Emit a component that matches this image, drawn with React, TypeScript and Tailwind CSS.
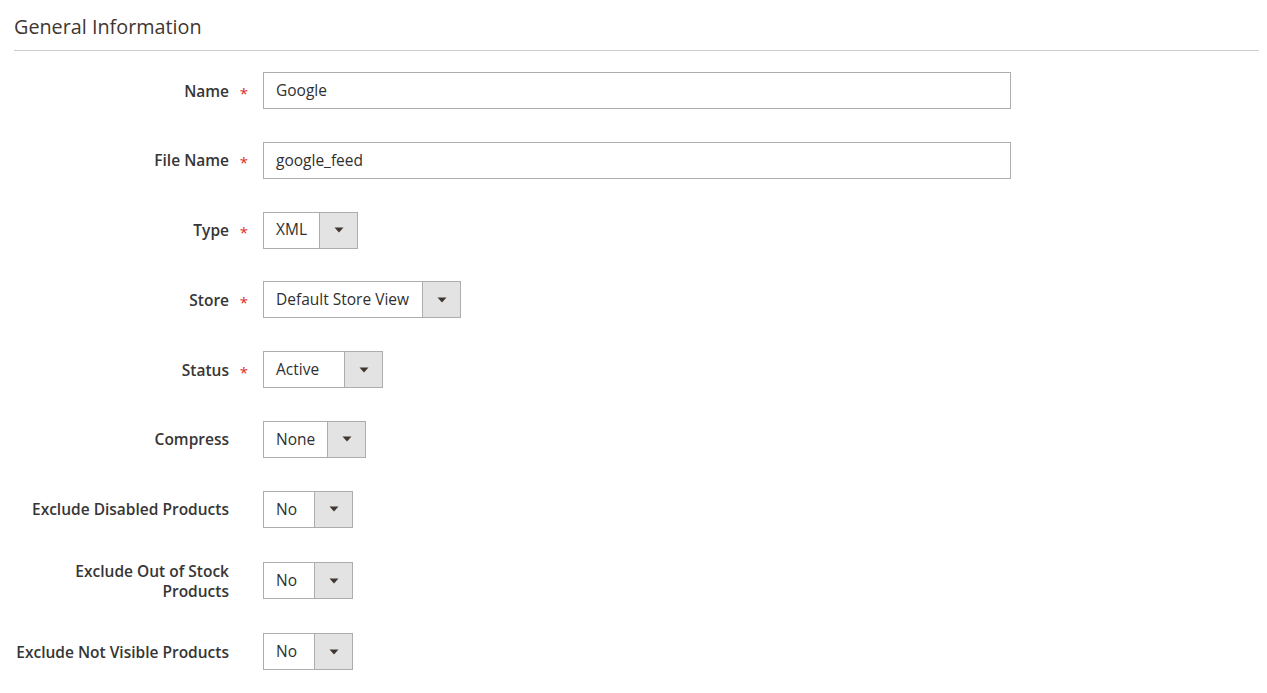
import React from 'react';

type Field = {
  label: string;
  required?: boolean;
  kind: 'text' | 'select';
  value: string;
  textWidth?: number; // white area width of a select
};

const fields: Field[] = [
  { label: 'Name', required: true, kind: 'text', value: 'Google' },
  { label: 'File Name', required: true, kind: 'text', value: 'google_feed' },
  { label: 'Type', required: true, kind: 'select', value: 'XML', textWidth: 55 },
  { label: 'Store', required: true, kind: 'select', value: 'Default Store View', textWidth: 158 },
  { label: 'Status', required: true, kind: 'select', value: 'Active', textWidth: 80 },
  { label: 'Compress', kind: 'select', value: 'None', textWidth: 63 },
  { label: 'Exclude Disabled Products', kind: 'select', value: 'No', textWidth: 50 },
  { label: 'Exclude Out of Stock Products', kind: 'select', value: 'No', textWidth: 50 },
  { label: 'Exclude Not Visible Products', kind: 'select', value: 'No', textWidth: 50 },
];

function SelectBox({ value, textWidth }: { value: string; textWidth: number }) {
  return (
    <div className="flex h-[37px] border border-[#adadad] bg-white">
      <div className="flex items-center pl-[12px]" style={{ width: textWidth }}>
        <span className="text-[15.5px] whitespace-nowrap text-[#303030]">{value}</span>
      </div>
      <div className="flex w-[38px] items-center justify-center border-l border-[#adadad] bg-[#e3e3e3]">
        <svg width="10" height="6" viewBox="0 0 10 6">
          <path d="M0.5 0.5 L9.5 0.5 L5 5.5 Z" fill="#41362f" />
        </svg>
      </div>
    </div>
  );
}

export default function App() {
  return (
    <div
      className="min-h-screen bg-white pr-[8px] pl-[12px] text-[#303030]"
      style={{ fontFamily: '"Open Sans", "Noto Sans", sans-serif' }}
    >
      {/* Fieldset title */}
      <div className="ml-[2px] border-b border-[#cccccc] pt-[13px] pb-[10px]">
        <h2 className="text-[19.8px] leading-[27px] font-normal text-[#41362f]">General Information</h2>
      </div>

      {/* Fields */}
      <div className="flex flex-col gap-[32.8px] pt-[21px]">
        {fields.map((f) => (
          <div key={f.label} className="flex items-center">
            <div className="relative w-[217px] text-right text-[15.5px] leading-[20px] font-semibold text-[#363636]">
              {f.label}
              {f.required && (
                <span className="absolute top-[2px] right-[-19px] text-[15px] leading-[20px] font-normal text-[#e02b27]">*</span>
              )}
            </div>
            <div className="ml-[34px]">
              {f.kind === 'text' ? (
                <div className="flex h-[37px] w-[748px] items-center border border-[#adadad] bg-white pl-[12px]">
                  <span className="text-[15.5px] text-[#303030]">{f.value}</span>
                </div>
              ) : (
                <SelectBox value={f.value} textWidth={f.textWidth ?? 55} />
              )}
            </div>
          </div>
        ))}
      </div>
    </div>
  );
}
